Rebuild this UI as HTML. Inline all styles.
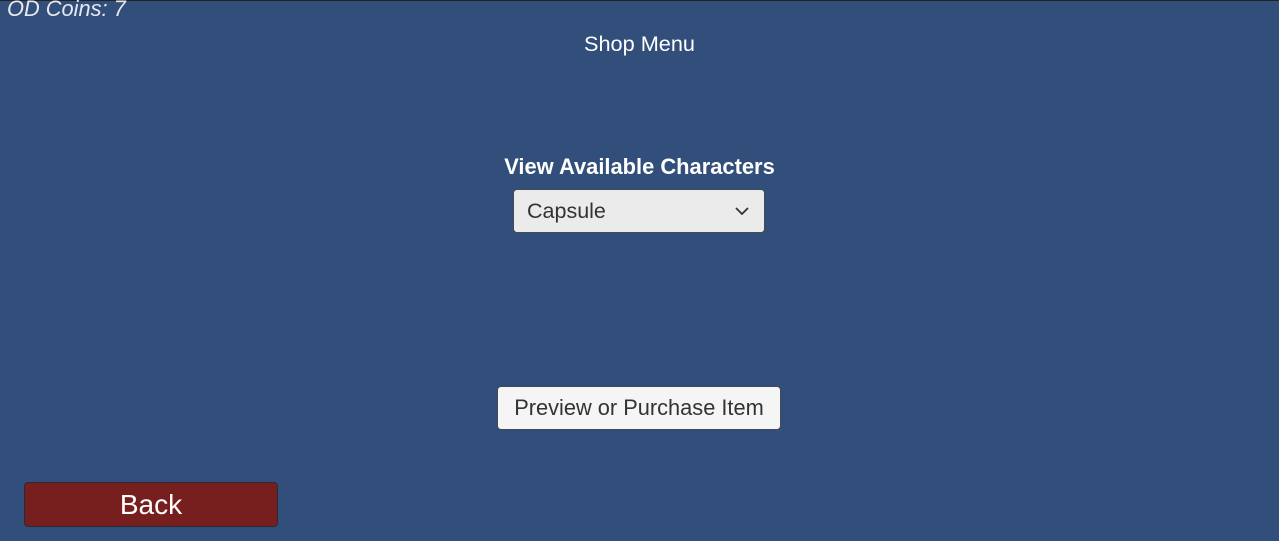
<!DOCTYPE html>
<html><head><style>
html,body{margin:0;padding:0}
body{width:1279px;height:541px;background:#314f7a;position:relative;overflow:hidden;font-family:"Liberation Sans",sans-serif}
.top{position:absolute;left:0;top:0;width:1279px;height:1px;background:#222}
.t{position:absolute;white-space:nowrap}
.box{position:absolute;box-sizing:border-box;border-radius:4px}
</style></head><body>
<div class="top"></div>
<div class="t" style="left:7px;top:-4px;font-size:21.8px;font-style:italic;color:#e8e8ee">OD Coins: 7</div>
<div class="t" style="left:0;width:1279px;text-align:center;top:31px;font-size:21.7px;color:#fff">Shop Menu</div>
<div class="t" style="left:0;width:1279px;text-align:center;top:154px;font-size:21.9px;font-weight:bold;color:#fff">View Available Characters</div>
<div class="box" style="left:513px;top:189px;width:252px;height:44px;background:#ebebeb;border:1px solid #444a55"></div>
<div class="t" style="left:527px;top:199px;font-size:21.5px;color:#333">Capsule</div>
<svg style="position:absolute;left:734px;top:205px" width="16" height="12"><path d="M2 3 L8 9 L14 3" fill="none" stroke="#333" stroke-width="1.8"/></svg>
<div class="box" style="left:497px;top:386px;width:284px;height:44px;background:#f5f5f5;border:1px solid #444a55"></div>
<div class="t" style="left:497px;width:284px;text-align:center;top:395px;font-size:21.8px;color:#333">Preview or Purchase Item</div>
<div class="box" style="left:24px;top:482px;width:254px;height:45px;background:#761f1e;border:1px solid #2b2b35"></div>
<div class="t" style="left:24px;width:254px;text-align:center;top:489px;font-size:28px;color:#fff">Back</div>
</body></html>
